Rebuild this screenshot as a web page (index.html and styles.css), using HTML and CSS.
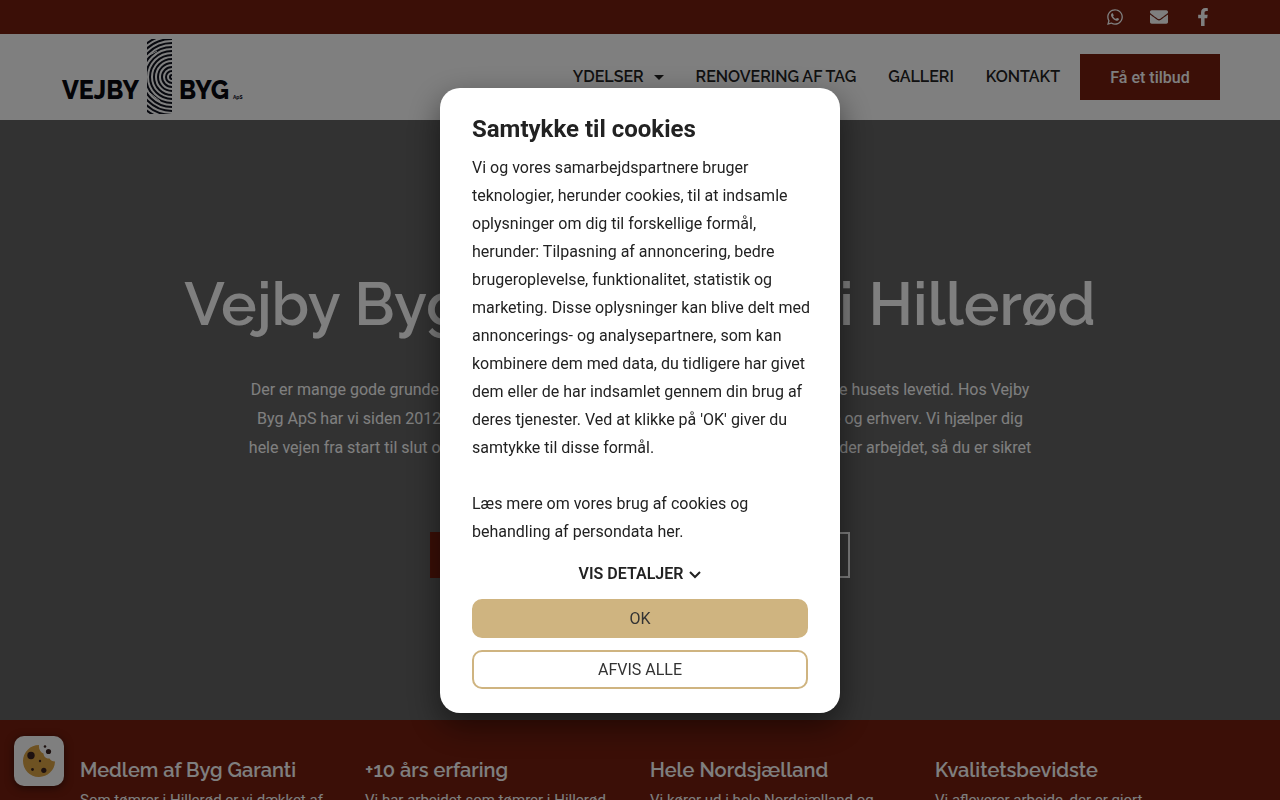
FILE: index.html
```html
<!DOCTYPE html>
<html lang="da">
<head>
  <meta charset="UTF-8">
  <meta name="viewport" content="width=device-width, initial-scale=1.0">
  <title>Vejby Byg ApS</title>
  <link rel="stylesheet" href="styles.css">
</head>
<body>

  <!-- Topbar -->
  <div class="topbar">
    <a href="#whatsapp" aria-label="WhatsApp"><svg width="18" height="18" viewBox="0 0 448 512"><path d="M380.900 97.100C339 55.100 283.200 32 223.900 32c-122.400 0-222 99.600-222 222 0 39.100 10.200 77.300 29.600 111L0 480l117.700-30.900c32.400 17.700 68.900 27 106.100 27h.1c122.300 0 224.100-99.600 224.100-222 0-59.300-25.200-115-67.100-157zm-157 341.600c-33.200 0-65.700-8.900-94-25.700l-6.700-4-69.800 18.300L72 359.200l-4.400-7c-18.500-29.400-28.200-63.300-28.200-98.200 0-101.700 82.800-184.500 184.600-184.500 49.300 0 95.600 19.200 130.400 54.100 34.800 34.900 56.200 81.200 56.100 130.500 0 101.800-84.900 184.600-186.600 184.600zm101.200-138.200c-5.500-2.800-32.800-16.200-37.900-18-5.100-1.900-8.800-2.800-12.500 2.800-3.700 5.600-14.300 18-17.600 21.800-3.200 3.700-6.500 4.200-12 1.400-32.600-16.300-54-29.100-75.500-66-5.700-9.800 5.700-9.100 16.300-30.300 1.800-3.700.9-6.900-.5-9.700-1.400-2.800-12.500-30.100-17.100-41.200-4.500-10.800-9.100-9.300-12.500-9.500-3.200-.2-6.900-.2-10.600-.2-3.700 0-9.700 1.400-14.800 6.900-5.100 5.600-19.400 19-19.400 46.300 0 27.300 19.900 53.700 22.600 57.400 2.800 3.700 39.100 59.700 94.800 83.800 35.200 15.200 49 16.500 66.600 13.900 10.700-1.600 32.800-13.400 37.400-26.400 4.600-13 4.600-24.100 3.200-26.400-1.300-2.500-5-3.900-10.500-6.600z"/></svg></a>
    <a href="#mail" aria-label="E-mail"><svg width="18" height="18" viewBox="0 0 512 512"><path d="M502.300 190.800c3.900-3.100 9.700-.2 9.700 4.700V400c0 26.500-21.500 48-48 48H48c-26.500 0-48-21.500-48-48V195.600c0-5 5.700-7.800 9.700-4.700 22.400 17.400 52.100 39.500 154.100 113.600 21.100 15.400 56.700 47.800 92.200 47.600 35.700.3 72-32.800 92.300-47.600 102-74.100 131.600-96.300 154-113.700zM256 320c23.200.4 56.600-29.200 73.400-41.400 132.700-96.300 142.800-104.700 173.400-128.700 5.800-4.500 9.200-11.500 9.200-18.900v-19c0-26.500-21.500-48-48-48H48c-26.500 0-48 21.500-48 48v19c0 7.400 3.400 14.300 9.200 18.900 30.600 23.900 40.700 32.400 173.400 128.700 16.800 12.200 50.200 41.800 73.400 41.400z"/></svg></a>
    <a href="#facebook" aria-label="Facebook"><svg width="18" height="18" viewBox="0 0 320 512"><path d="M279.140 288l14.220-92.660h-88.910v-60.130c0-25.350 12.420-50.060 52.240-50.060h40.420V6.260S260.430 0 225.360 0c-73.220 0-121.080 44.380-121.080 124.720v70.620H22.890V288h81.390v224h100.170V288z"/></svg></a>
  </div>

  <!-- Header -->
  <header>
    <a class="logo" href="#top" aria-label="Vejby Byg ApS">
      <svg width="184" height="76" viewBox="0 0 184 76">
        <defs>
          <clipPath id="plank"><rect x="87" y="0" width="25" height="75"/></clipPath>
        </defs>
        <g class="logo-rings" clip-path="url(#plank)">
          <circle cx="112" cy="38" r="2"/>
          <circle cx="112" cy="38" r="6"/>
          <circle cx="112" cy="38" r="10"/>
          <circle cx="112" cy="38" r="14"/>
          <circle cx="112" cy="38" r="18"/>
          <circle cx="112" cy="38" r="22"/>
          <circle cx="112" cy="38" r="26"/>
          <circle cx="112" cy="38" r="30"/>
          <circle cx="112" cy="38" r="34"/>
          <circle cx="112" cy="38" r="38"/>
          <circle cx="112" cy="38" r="42"/>
          <path class="crack" d="M86 18L97 12M86 51L100 62"/>
        </g>
        <text class="logo-text" x="2" y="60">VEJBY</text>
        <text class="logo-text" x="119" y="60">BYG</text>
        <text class="logo-small" x="173" y="60">ApS</text>
      </svg>
    </a>
    <nav>
      <a href="#ydelser">YDELSER <span class="caret"></span></a>
      <a href="#tag">RENOVERING AF TAG</a>
      <a href="#galleri">GALLERI</a>
      <a href="#kontakt">KONTAKT</a>
    </nav>
    <button class="btn" type="button">Få et tilbud</button>
  </header>

  <!-- Hero -->
  <section class="hero">
    <h1>Vejby Byg – din tømrer i Hillerød</h1>
    <p>Der er mange gode grunde til at få fornyet sit tag, blandt andet for at kunne forlænge husets levetid. Hos Vejby<br>
      Byg ApS har vi siden 2012 udført solidt tømrerarbejde i høj kvalitet for både private og erhverv. Vi hjælper dig<br>
      hele vejen fra start til slut og holder altid en rigtig god og løbende dialog med dig under arbejdet, så du er sikret<br>
      et godt resultat.</p>
    <div class="hero-buttons">
      <button class="btn" type="button">Få et tilbud</button>
      <button class="btn btn-outline" type="button">Læs mere</button>
    </div>
  </section>

  <!-- Fordele -->
  <section class="features">
    <div class="feature">
      <h2>Medlem af Byg Garanti</h2>
      <p>Som tømrer i Hillerød er vi dækket af Byg Garanti.</p>
    </div>
    <div class="feature">
      <h2>+10 års erfaring</h2>
      <p>Vi har arbejdet som tømrer i Hillerød gennem mere end 10 år.</p>
    </div>
    <div class="feature">
      <h2>Hele Nordsjælland</h2>
      <p>Vi kører ud i hele Nordsjælland og hjælper dig.</p>
    </div>
    <div class="feature">
      <h2>Kvalitetsbevidste</h2>
      <p>Vi afleverer arbejde, der er gjort ordentligt.</p>
    </div>
  </section>

  <button class="cookie-icon" type="button" aria-label="Cookies">
    <svg width="32" height="32" viewBox="0 0 32 32">
      <path fill="#dda445" d="M16 0A16 16 0 1 0 32 16.500C29.500 16.500 27.500 15.500 26.500 13.500C24 14 20.500 12 20.500 8.500C17.500 7.500 15.500 4 16 0Z"/>
      <g fill="#3a2320">
        <circle cx="8" cy="10.500" r="3.700"/>
        <circle cx="25.500" cy="6.500" r="2.600"/>
        <circle cx="22" cy="1.500" r="1.300"/>
        <circle cx="17" cy="16" r="1.200"/>
        <circle cx="9.500" cy="24.500" r="1.400"/>
        <circle cx="20.800" cy="25.300" r="2.600"/>
      </g>
    </svg>
  </button>

  <!-- Cookie samtykke -->
  <div class="modal">
    <div class="modal-content" role="dialog" aria-labelledby="cookieTitle">
      <h2 id="cookieTitle">Samtykke til cookies</h2>
      <p>Vi og vores samarbejdspartnere bruger teknologier, herunder cookies, til at indsamle oplysninger om dig til forskellige formål, herunder: Tilpasning af annoncering, bedre brugeroplevelse, funktionalitet, statistik og marketing. Disse oplysninger kan blive delt med annoncerings- og analysepartnere, som kan kombinere dem med data, du tidligere har givet dem eller de har indsamlet gennem din brug af deres tjenester. Ved at klikke på 'OK' giver du samtykke til disse formål.</p>
      <p>Læs mere om vores brug af cookies og behandling af persondata <a href="#cookies">her</a>.</p>
      <button class="details" type="button">VIS DETALJER
        <svg width="12" height="8" viewBox="0 0 12 8"><path d="M1 1L6 6L11 1" fill="none" stroke="currentColor" stroke-width="2"/></svg>
      </button>
      <button class="consent accept" type="button">OK</button>
      <button class="consent" type="button">AFVIS ALLE</button>
    </div>
  </div>

</body>
</html>
```
FILE: styles.css
```css
* { box-sizing: border-box; margin: 0; padding: 0; }

body {
  font-family: Roboto, sans-serif;
  font-size: 16px;
  color: #222;
  background: #fff;
  height: 100vh;
  overflow: hidden;
}

a { color: inherit; text-decoration: none; }
button { font-family: inherit; font-size: 16px; cursor: pointer; }

/* Topbar */
.topbar {
  background: #761e0e;
  height: 34px;
  padding: 0 68px;
  display: flex;
  justify-content: flex-end;
  align-items: center;
  gap: 26px;
}

.topbar svg {
  display: block;
  fill: #fff;
}

/* Header */
header {
  height: 86px;
  padding: 0 60px;
  display: flex;
  align-items: center;
}

.logo { margin-right: auto; }
.logo svg { display: block; }

.logo-rings {
  fill: none;
  stroke: #10131f;
  stroke-width: 2;
}

.logo-rings .crack {
  stroke: #fff;
  stroke-width: 1;
}

.logo-text {
  font-family: Raleway, sans-serif;
  font-weight: 800;
  font-size: 25px;
  fill: #08090f;
}

.logo-small {
  font-family: Raleway, sans-serif;
  font-weight: 800;
  font-size: 5px;
  fill: #223;
}

nav {
  display: flex;
  gap: 32px;
  margin-right: 20px;
}

nav a {
  font-family: Raleway, sans-serif;
  font-weight: 600;
  font-size: 16px;
  line-height: 20px;
  white-space: nowrap;
}

.caret {
  display: inline-block;
  margin-left: 6px;
  border: 5px solid transparent;
  border-top-color: #222;
  border-bottom: 0;
  vertical-align: middle;
}

.btn {
  height: 46px;
  min-width: 140px;
  background: #761e0e;
  color: #fff;
  border: none;
  font-weight: 500;
}

/* Hero */
.hero {
  height: 600px;
  background: #646464;
  color: #fff;
  text-align: center;
  padding-top: 148px;
}

.hero h1 {
  font-family: Raleway, sans-serif;
  font-weight: 600;
  font-size: 60px;
  line-height: 72px;
  white-space: nowrap;
}

.hero p {
  margin-top: 35px;
  line-height: 29px;
  white-space: nowrap;
}

.hero-buttons {
  display: flex;
  justify-content: center;
  gap: 20px;
  margin-top: 41px;
}

.hero-buttons .btn { width: 200px; }

.btn-outline {
  background: transparent;
  border: 2px solid #fff;
}

/* Fordele */
.features {
  background: #761e0e;
  color: #fff;
  padding: 38px 70px;
  display: grid;
  grid-template-columns: repeat(4, 1fr);
}

.feature { padding: 0 10px; }

.feature h2 {
  font-family: Raleway, sans-serif;
  font-weight: 600;
  font-size: 20px;
  line-height: 24px;
}

.feature p {
  margin-top: 4px;
  font-size: 15px;
  line-height: 29px;
}

.cookie-icon {
  position: fixed;
  left: 14px;
  bottom: 14px;
  width: 50px;
  height: 50px;
  border: none;
  border-radius: 10px;
  background: #fff;
  box-shadow: 0 2px 8px rgba(0,0,0,0.5);
  display: flex;
  justify-content: center;
  align-items: center;
}

/* Cookie samtykke */
.modal {
  position: fixed;
  inset: 0;
  background: rgba(0,0,0,0.5);
  display: flex;
  justify-content: center;
  align-items: center;
}

.modal-content {
  width: 400px;
  padding: 24px 24px 24px 32px;
  background: #fff;
  border-radius: 20px;
  box-shadow: 0 12px 32px rgba(0,0,0,0.5);
  display: flex;
  flex-direction: column;
}

.modal-content h2 {
  font-size: 24px;
  line-height: 34px;
  margin-bottom: 8px;
}

.modal-content p { line-height: 28px; }
.modal-content p + p { margin-top: 28px; }
.modal-content button { margin-right: 8px; }

.modal-content .details {
  align-self: center;
  height: 28px;
  margin: 14px 8px 11px 0;
  background: none;
  border: none;
  color: #222;
  font-weight: 600;
}

.details svg { margin-left: 2px; }

.consent {
  height: 39px;
  border: 2px solid #cfb480;
  border-radius: 10px;
  background: #fff;
  color: #333;
}

.consent.accept {
  background: #cfb480;
  margin-bottom: 12px;
}
```
